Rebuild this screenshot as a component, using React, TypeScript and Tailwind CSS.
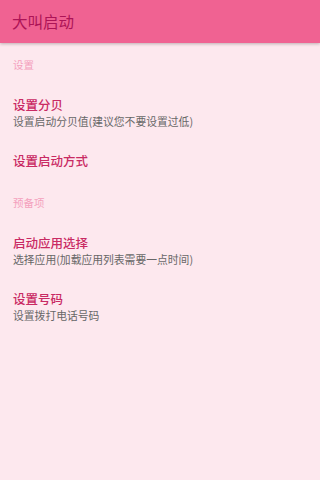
const font = { fontFamily: '"Noto Sans CJK SC", "Noto Sans", sans-serif' }

type Row =
  | { kind: 'category'; label: string; h: string }
  | { kind: 'item'; title: string; summary?: string; h: string }

const rows: Row[] = [
  { kind: 'category', label: '设置', h: 'h-[43px]' },
  { kind: 'item', title: '设置分贝', summary: '设置启动分贝值(建议您不要设置过低)', h: 'h-[54px]' },
  { kind: 'item', title: '设置启动方式', h: 'h-[42px]' },
  { kind: 'category', label: '预备项', h: 'h-[41px]' },
  { kind: 'item', title: '启动应用选择', summary: '选择应用(加载应用列表需要一点时间)', h: 'h-[55px]' },
  { kind: 'item', title: '设置号码', summary: '设置拨打电话号码', h: 'h-[57px]' },
]

export default function App() {
  return (
    <div className="w-full min-h-screen bg-[#fde8ee] overflow-hidden" style={font}>
      <header className="h-[43px] bg-[#f06292] flex items-center px-[12px] shadow-[0_1px_3px_rgba(0,0,0,0.25)] relative">
        <h1 className="text-[15.5px] leading-none text-[#ad1457]">大叫启动</h1>
      </header>
      <div>
        {rows.map((row, i) =>
          row.kind === 'category' ? (
            <div key={i} className={`${row.h} flex items-center px-[13px]`}>
              <span className="text-[10.5px] leading-[14px] text-[#f4a0bd]">{row.label}</span>
            </div>
          ) : (
            <div key={i} className={`${row.h} flex flex-col justify-center px-[13px]`}>
              <span className="text-[12.5px] leading-[16px] font-medium text-[#c92a63]">{row.title}</span>
              {row.summary && (
                <span className="text-[10.8px] leading-[16px] text-[#676767]">{row.summary}</span>
              )}
            </div>
          ),
        )}
      </div>
    </div>
  )
}
